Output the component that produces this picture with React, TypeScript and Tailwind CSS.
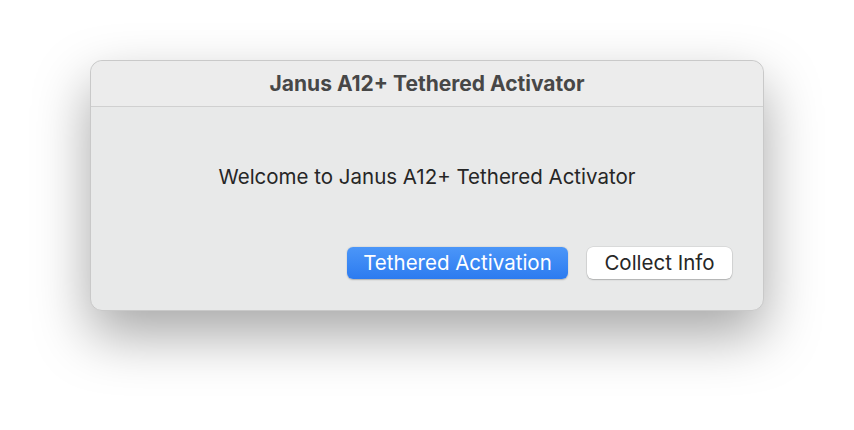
export default function App() {
  return (
    <div className="h-[430px] w-[854px] overflow-hidden bg-white pl-[90px] pt-[60px] font-['Inter','Liberation_Sans',sans-serif]">
      <div className="flex h-[251px] w-[674px] flex-col rounded-[12px] border border-[#c9c9c9] bg-[#e8e9e9] shadow-[0_24px_55px_rgba(0,0,0,0.35)]">
        <div className="flex h-[46px] items-center justify-center rounded-t-[12px] border-b border-[#d0d0d0] bg-[#ececec] text-[21px] font-bold text-[#474747]">
          Janus A12+ Tethered Activator
        </div>
        <div className="flex flex-1 flex-col px-[31px]">
          <div className="mt-[58px] text-center text-[20.5px] leading-[24px] text-[#262626]">
            Welcome to Janus A12+ Tethered Activator
          </div>
          <div className="mt-[58px] flex justify-end gap-[19px]">
            <button className="h-[32px] w-[221px] rounded-[6px] bg-gradient-to-b from-[#4b96f8] to-[#2c7bf0] text-[20.5px] text-white shadow-[0_0.5px_1.5px_rgba(0,0,0,0.25)]">
              Tethered Activation
            </button>
            <button className="h-[32px] w-[145px] rounded-[6px] bg-white text-[20.5px] text-[#262626] shadow-[0_0_0_0.5px_rgba(0,0,0,0.12),0_1px_1.5px_rgba(0,0,0,0.2)]">
              Collect Info
            </button>
          </div>
        </div>
      </div>
    </div>
  );
}
